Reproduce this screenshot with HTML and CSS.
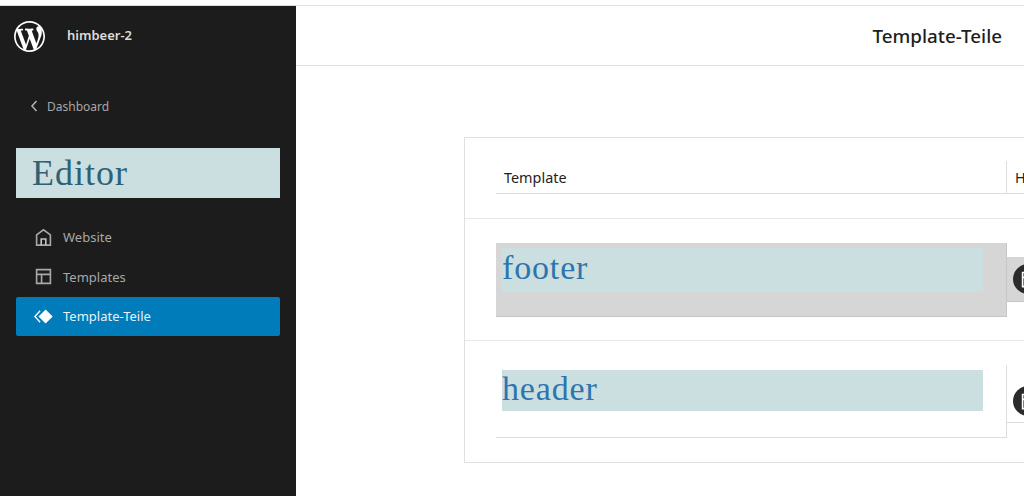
FILE: index.html
```html
<!DOCTYPE html>
<html lang="de">
<head>
<meta charset="utf-8">
<title>Template-Teile</title>
<link rel="stylesheet" href="styles.css">
</head>
<body>
<div class="page">
  <aside class="sidebar">
    <div class="site">
      <svg class="wp-logo" viewBox="0 0 20 20" aria-hidden="true"><path fill="#fff" d="M20 10c0-5.51-4.49-10-10-10C4.48 0 0 4.49 0 10c0 5.52 4.48 10 10 10 5.51 0 10-4.48 10-10zM7.78 15.37L4.37 6.22c.55-.02 1.17-.08 1.17-.08.5-.06.44-1.13-.06-1.11 0 0-1.45.11-2.37.11-.18 0-.37 0-.58-.01C4.12 2.69 6.87 1.11 10 1.11c2.33 0 4.45.87 6.05 2.34-.68-.11-1.65.39-1.65 1.58 0 .74.45 1.36.9 2.1.35.61.55 1.36.55 2.46 0 1.49-1.4 5-1.4 5l-3.03-8.37c.54-.02.82-.17.82-.17.5-.05.44-1.25-.06-1.22 0 0-1.44.12-2.38.12-.87 0-2.33-.12-2.33-.12-.5-.03-.56 1.2-.06 1.22l.92.08 1.26 3.41zM17.41 10c.24-.64.74-1.87.43-4.25.7 1.29 1.05 2.71 1.05 4.25 0 3.29-1.73 6.24-4.4 7.78.97-2.59 1.94-5.2 2.92-7.78zM6.1 18.09C3.12 16.65 1.11 13.53 1.11 10c0-1.3.23-2.48.72-3.59C3.25 10.3 4.67 14.2 6.1 18.09zm4.03-6.63l2.58 6.98c-.86.29-1.76.45-2.71.45-.79 0-1.57-.11-2.29-.33.81-2.38 1.62-4.74 2.42-7.1z"/></svg>
      <span class="site-name">himbeer-2</span>
    </div>
    <a class="back"><svg class="chev" viewBox="0 0 10 14" aria-hidden="true"><path d="M7.5 2 L3 7 L7.5 12" fill="none" stroke="#b4b4b4" stroke-width="1.5"/></svg>Dashboard</a>
    <h1 class="editor">Editor</h1>
    <nav class="nav">
      <a class="nav-item">
        <svg class="nav-icon" viewBox="0 0 24 24" aria-hidden="true"><path fill="none" stroke="#a8a8a8" stroke-width="1.7" d="M4.8 20V9.3L12 4l7.2 5.3V20z"/><path fill="none" stroke="#c4c4c4" stroke-width="1.7" d="M9.6 20v-6.4h4.8V20"/></svg>
        Website
      </a>
      <a class="nav-item">
        <svg class="nav-icon" viewBox="0 0 24 24" aria-hidden="true"><path fill="none" stroke="#a8a8a8" stroke-width="1.7" d="M4.8 4.8h14.4v14.4H4.8zM4.8 9.8h14.4M10 9.8v9.4"/></svg>
        Templates
      </a>
      <a class="nav-item active">
        <svg class="nav-icon" viewBox="0 0 24 24" aria-hidden="true"><path fill="#fff" d="M14.2 4.6 21.6 12l-7.4 7.4L6.8 12z"/><path fill="none" stroke="#fff" stroke-width="1.4" d="M8.5 6 3 12l5.5 6"/></svg>
        Template-Teile
      </a>
    </nav>
  </aside>
  <main class="main">
    <header class="topbar"><h2 class="title">Template-Teile</h2></header>
    <section class="card">
      <div class="row head">
        <div class="cell first">Template</div>
        <div class="cell second">Hinzugefügt von</div>
      </div>
      <div class="row">
        <div class="cell first tall hovered"><span class="name">footer</span></div>
        <div class="cell second owner hovered"><span class="avatar"><svg viewBox="0 0 24 24" aria-hidden="true"><path fill="none" stroke="#fff" stroke-width="1.5" d="M7 6h10v13H7zM7 10.5h10M11 10.5V19"/></svg></span></div>
      </div>
      <div class="row">
        <div class="cell first tall"><span class="name">header</span></div>
        <div class="cell second owner"><span class="avatar"><svg viewBox="0 0 24 24" aria-hidden="true"><path fill="none" stroke="#fff" stroke-width="1.5" d="M7 6h10v13H7zM7 10.5h10M11 10.5V19"/></svg></span></div>
      </div>
    </section>
  </main>
</div>
</body>
</html>
```

FILE: styles.css
```css
* { box-sizing: border-box; }
html, body { margin: 0; height: 100%; overflow: hidden; background: #fff; }
body { font-family: "Noto Sans", "Open Sans", sans-serif; font-size: 13px; color: #1e1e1e; }
.page { display: flex; height: 496px; padding-top: 5px; }
.sidebar { width: 296px; flex: none; background: #1c1c1c; border-top: 1px solid #dcdcdc; color: #ccc; }
.main { flex: 1; min-width: 0; border-top: 1px solid #e0e0e0; overflow: hidden; }
.site { display: flex; align-items: center; height: 60px; padding-left: 14px; }
.wp-logo { width: 31px; height: 31px; flex: none; }
.site-name { margin: -2px 0 0 22px; font-size: 13px; font-weight: 600; color: #dcdcdc; }
.back { display: flex; align-items: center; margin-top: 21px; padding-left: 29px; height: 38px; font-size: 12px; color: #a8a8a8; }
.chev { width: 10px; height: 14px; margin-right: 8px; }
.editor { margin: 23px 16px 0; height: 50px; padding: 0 16px; background: #cbdfe1; color: #2f6176; font: 400 36px/50px "Liberation Serif", serif; letter-spacing: 1px; }
.nav { display: flex; flex-direction: column; margin: 20px 16px 0; }
.nav-item { display: flex; align-items: center; height: 39.5px; padding: 0 0 1px 16px; gap: 8px; font-size: 13px; color: #a8a8a8; border-radius: 2px; }
.nav-item.active { height: 39px; background: #007cba; color: #e8f2f8; }
.nav-icon { width: 23px; height: 23px; flex: none; }
.topbar { display: flex; align-items: center; justify-content: flex-end; height: 60px; padding: 1px 22px 0 0; border-bottom: 1px solid #e0e0e0; }
.title { margin: 0; font-size: 18.8px; font-weight: 500; color: #1e1e1e; }
.card { width: 800px; height: 326px; margin: 71px 0 0 168px; border: 1px solid #e0e0e0; }
.row { display: grid; grid-template-columns: 511px 260px; padding: 24px 0 24px 31px; height: 122px; border-bottom: 1px solid #e8e8e8; align-items: center; }
.row:last-child { border-bottom: 0; }
.row.head { height: 81px; padding-top: 22px; }
.cell { border-bottom: 1px solid #ddd; }
.cell.first { border-right: 1px solid #ddd; }
.head .cell { height: 33px; padding: 5px 8px 0; font-size: 14.4px; font-weight: 400; color: #1e1e1e; line-height: 24px; white-space: nowrap; overflow: hidden; }
.tall { height: 74px; align-self: start; padding: 5px 23px 0 6px; }
.row:last-child .tall { height: 73px; }
.name { display: block; height: 44px; background: #cbdfe1; color: #2e74ad; font: 400 34px/39px "Liberation Serif", serif; letter-spacing: .85px; }
.row:last-child .name { height: 41px; line-height: 38px; }
.hovered { background: #d6d6d6; border-color: #c6c6c6 !important; }
.owner { height: 45px; padding-left: 6px; display: flex; align-items: center; align-self: start; margin-top: 14px; }
.avatar { display: flex; align-items: center; justify-content: center; width: 30px; height: 30px; border-radius: 50%; background: #2b2b2b; flex: none; }
.row:last-child .avatar { margin-top: 2px; }
.row:last-child .owner { margin-top: 13px; }
.avatar svg { width: 26px; height: 26px; }
```
